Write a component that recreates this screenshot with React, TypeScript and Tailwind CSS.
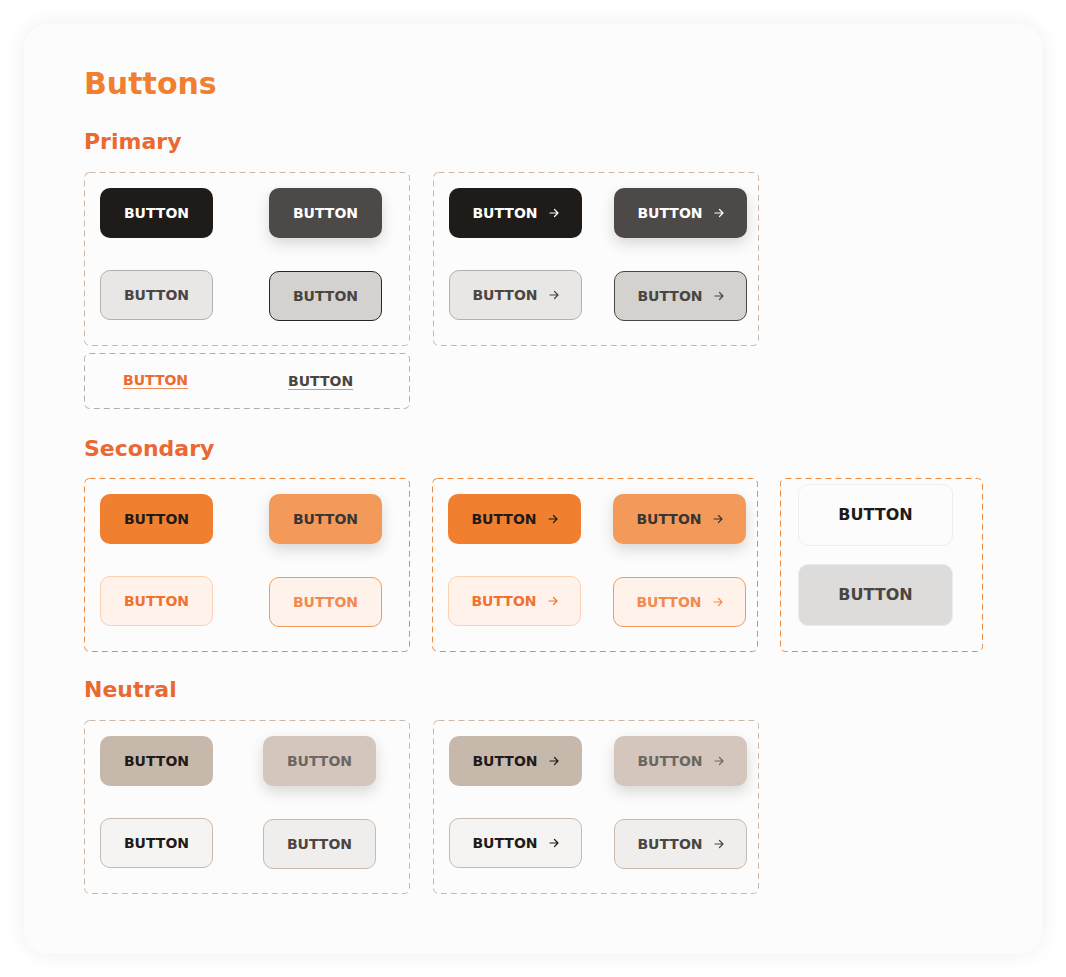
import { ReactNode } from "react";

type Btn = { cls: string; arrow?: boolean; w: number; h?: number; big?: boolean };

function Arrow() {
  return (
    <svg width="10" height="10" viewBox="0 0 10 10" fill="none" className="shrink-0">
      <path d="M1 5h8M5.5 1.5 9 5 5.5 8.5" stroke="currentColor" strokeWidth="1.2" strokeLinecap="round" strokeLinejoin="round" />
    </svg>
  );
}

function Button({ cls, arrow, w, h = 50, big }: Btn) {
  return (
    <div
      className={`box-border flex items-center justify-center gap-[11px] rounded-[10px] font-bold ${big ? "text-[16px]" : "text-[14px]"} ${cls}`}
      style={{ width: w, height: h }}
    >
      <span>BUTTON</span>
      {arrow && <Arrow />}
    </div>
  );
}

function DashedBox({ w, h, color, className = "", children }: { w: number; h: number; color: string; className?: string; children: ReactNode }) {
  return (
    <div className={`relative shrink-0 ${className}`} style={{ width: w, height: h }}>
      <svg className="pointer-events-none absolute inset-0" width={w} height={h}>
        <rect x="0.5" y="0.5" width={w - 1} height={h - 1} rx="5" fill="none" stroke={color} strokeDasharray="6 4" />
      </svg>
      {children}
    </div>
  );
}

const beige = "#cbb8a9";
const orange = "#f08a3e";
const shadow = "shadow-[0_6px_14px_rgba(40,30,20,0.16)]";

function Grid({ gap, children }: { gap: number; children: ReactNode }) {
  return (
    <div className="grid grid-cols-2 gap-y-[32px] pl-[16px] pt-[16px] w-max" style={{ columnGap: gap }}>
      {children}
    </div>
  );
}

function Heading({ children, className = "" }: { children: ReactNode; className?: string }) {
  return <h2 className={`text-[22px] leading-[28px] font-bold text-[#ea6932] ${className}`}>{children}</h2>;
}

export default function App() {
  return (
    <div className="min-h-screen bg-white p-6 font-['DejaVu_Sans','Noto_Sans',sans-serif]">
      <div className="box-border h-[930px] w-[1018px] rounded-3xl bg-[#fcfcfc] pl-[60px] pt-[40px] shadow-[0_0_22px_rgba(0,0,0,0.07)]">
        <h1 className="text-[30px] leading-[40px] font-bold text-[#f07f30]">Buttons</h1>

        <Heading className="mt-6">Primary</Heading>
        <div className="mt-4 flex gap-[23px]">
          <DashedBox w={326} h={174} color={beige}>
            <Grid gap={56}>
              <Button w={113} cls="bg-[#1f1b18] text-white" />
              <Button w={113} cls={`bg-[#4d4946] text-white ${shadow}`} />
              <Button w={113} cls="border border-[#b5b0ac] bg-[#e8e7e5] text-[#4a4542]" />
              <Button w={113} cls="mt-px border border-[#2a2522] bg-[#d4d2cf] text-[#4a4542]" />
            </Grid>
          </DashedBox>
          <DashedBox w={326} h={174} color={beige}>
            <Grid gap={32}>
              <Button w={133} arrow cls="bg-[#1f1b18] text-white" />
              <Button w={133} arrow cls={`bg-[#4d4946] text-white ${shadow}`} />
              <Button w={133} arrow cls="border border-[#b5b0ac] bg-[#e8e7e5] text-[#4a4542]" />
              <Button w={133} arrow cls="mt-px border border-[#4a4542] bg-[#d4d2cf] text-[#4a4542]" />
            </Grid>
          </DashedBox>
        </div>
        <DashedBox w={326} h={56} color="#b3aeaa" className="mt-[7px]">
          <div className="flex h-full items-center gap-[100px] pl-[39px] pb-px text-[14px] font-bold">
            <span className="text-[#ee6a30] underline decoration-[#f08a50] underline-offset-[3px]">BUTTON</span>
            <span className="mt-0.5 text-[#4a4542] underline decoration-[#a9a4a0] underline-offset-[3px]">BUTTON</span>
          </div>
        </DashedBox>

        <Heading className="mt-[26px]">Secondary</Heading>
        <div className="mt-[15px] flex gap-[22px]">
          <DashedBox w={326} h={174} color={orange}>
            <Grid gap={56}>
              <Button w={113} cls="bg-[#f08030] text-[#1f1b18]" />
              <Button w={113} cls={`bg-[#f39a5a] text-[#3a3532] ${shadow}`} />
              <Button w={113} cls="border border-[#fbd0b3] bg-[#fef2eb] text-[#ef7230]" />
              <Button w={113} cls="mt-px border border-[#f39a5a] bg-[#fef2eb] text-[#f28a50]" />
            </Grid>
          </DashedBox>
          <DashedBox w={326} h={174} color={orange}>
            <Grid gap={32}>
              <Button w={133} arrow cls="bg-[#f08030] text-[#1f1b18]" />
              <Button w={133} arrow cls={`bg-[#f39a5a] text-[#3a3532] ${shadow}`} />
              <Button w={133} arrow cls="border border-[#fbd0b3] bg-[#fef2eb] text-[#ef7230]" />
              <Button w={133} arrow cls="mt-px border border-[#f39a5a] bg-[#fef2eb] text-[#f28a50]" />
            </Grid>
          </DashedBox>
          <DashedBox w={203} h={174} color={orange}>
            <div className="flex flex-col gap-[18px] pl-[18px] pt-[6px]">
              <Button w={155} h={62} big cls="border border-[#efeeed] bg-[#fcfcfc] text-[#1f1b18]" />
              <Button w={155} h={62} big cls="border border-[#ececec] bg-[#dddcdb] text-[#4a4542]" />
            </div>
          </DashedBox>
        </div>

        <Heading className="mt-6">Neutral</Heading>
        <div className="mt-4 flex gap-[23px]">
          <DashedBox w={326} h={174} color={beige}>
            <Grid gap={50}>
              <Button w={113} cls="bg-[#c6b8ab] text-[#1f1b18]" />
              <Button w={113} cls={`bg-[#d4c6bc] text-[#6b6662] ${shadow}`} />
              <Button w={113} cls="border border-[#cbb9ab] bg-[#f5f4f3] text-[#1f1b18]" />
              <Button w={113} cls="mt-px border border-[#cbb9ab] bg-[#f0eeec] text-[#4a4542]" />
            </Grid>
          </DashedBox>
          <DashedBox w={326} h={174} color={beige}>
            <Grid gap={32}>
              <Button w={133} arrow cls="bg-[#c6b8ab] text-[#1f1b18]" />
              <Button w={133} arrow cls={`bg-[#d4c6bc] text-[#6b6662] ${shadow}`} />
              <Button w={133} arrow cls="border border-[#cbb9ab] bg-[#f5f4f3] text-[#1f1b18]" />
              <Button w={133} arrow cls="mt-px border border-[#cbb9ab] bg-[#f0eeec] text-[#4a4542]" />
            </Grid>
          </DashedBox>
        </div>
      </div>
    </div>
  );
}
